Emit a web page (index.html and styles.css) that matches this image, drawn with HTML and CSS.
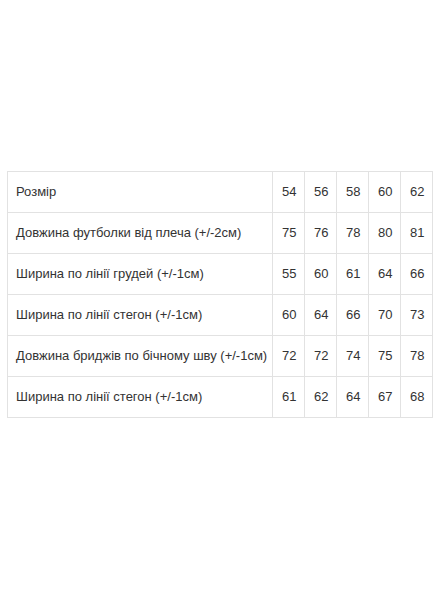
FILE: index.html
```html
<!DOCTYPE html>
<html>
<head>
<meta charset="utf-8">
<link rel="stylesheet" href="styles.css">
</head>
<body>
<table class="sizes">
  <colgroup>
    <col class="c-label">
    <col class="c-num">
    <col class="c-num">
    <col class="c-num">
    <col class="c-num">
    <col class="c-num">
  </colgroup>
  <tbody>
    <tr><td>Розмір</td><td>54</td><td>56</td><td>58</td><td>60</td><td>62</td></tr>
    <tr><td>Довжина футболки від плеча (+/-2см)</td><td>75</td><td>76</td><td>78</td><td>80</td><td>81</td></tr>
    <tr><td>Ширина по лінії грудей (+/-1см)</td><td>55</td><td>60</td><td>61</td><td>64</td><td>66</td></tr>
    <tr><td>Ширина по лінії стегон (+/-1см)</td><td>60</td><td>64</td><td>66</td><td>70</td><td>73</td></tr>
    <tr><td>Довжина бриджів по бічному шву (+/-1см)</td><td>72</td><td>72</td><td>74</td><td>75</td><td>78</td></tr>
    <tr><td>Ширина по лінії стегон (+/-1см)</td><td>61</td><td>62</td><td>64</td><td>67</td><td>68</td></tr>
  </tbody>
</table>
</body>
</html>
```
FILE: styles.css
```css
html, body {
  margin: 0;
  padding: 0;
  background: #fff;
}
body {
  width: 437px;
  height: 608px;
  font-family: "Liberation Sans", Arial, sans-serif;
  font-size: 13px;
  color: #333;
}
.sizes {
  margin: 171px 0 0 7px;
  border-collapse: collapse;
  table-layout: fixed;
  width: 425px;
}
.c-label { width: 265px; }
.c-num { width: 32px; }
.sizes td {
  border: 1px solid #e2e2e2;
  height: 41px;
  padding: 0 0 0 8px;
  box-sizing: border-box;
  vertical-align: middle;
  white-space: nowrap;
  line-height: 16px;
}
.sizes td + td {
  padding-left: 9px;
}
```
